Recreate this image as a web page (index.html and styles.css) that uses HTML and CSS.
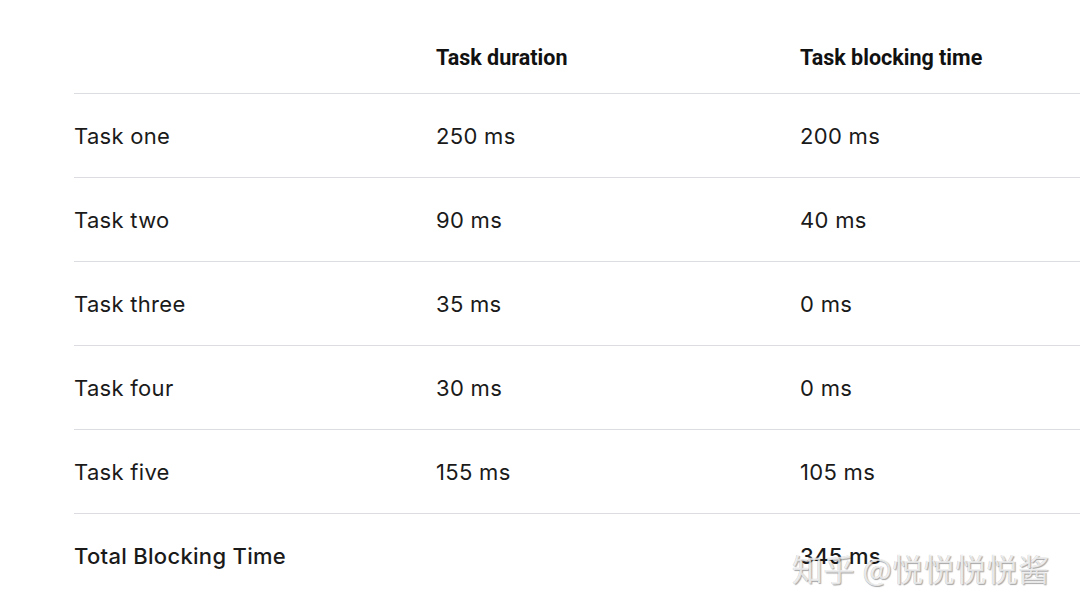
FILE: index.html
```html
<!DOCTYPE html>
<html lang="en">
<head>
<meta charset="utf-8">
<link rel="stylesheet" href="styles.css">
</head>
<body>
<div class="page">
  <div class="table">
    <div class="row head">
      <div class="cell"></div>
      <div class="cell">Task duration</div>
      <div class="cell">Task blocking time</div>
    </div>
    <div class="row">
      <div class="cell">Task one</div>
      <div class="cell">250 ms</div>
      <div class="cell">200 ms</div>
    </div>
    <div class="row">
      <div class="cell">Task two</div>
      <div class="cell">90 ms</div>
      <div class="cell">40 ms</div>
    </div>
    <div class="row">
      <div class="cell">Task three</div>
      <div class="cell">35 ms</div>
      <div class="cell">0 ms</div>
    </div>
    <div class="row">
      <div class="cell">Task four</div>
      <div class="cell">30 ms</div>
      <div class="cell">0 ms</div>
    </div>
    <div class="row">
      <div class="cell">Task five</div>
      <div class="cell">155 ms</div>
      <div class="cell">105 ms</div>
    </div>
    <div class="row total">
      <div class="cell">Total Blocking Time</div>
      <div class="cell"></div>
      <div class="cell">345 ms</div>
    </div>
  </div>
  <div class="watermark">知乎 @悦悦悦悦酱</div>
</div>
</body>
</html>
```
FILE: styles.css
```css
html, body {
  margin: 0;
  padding: 0;
  background: #ffffff;
}
body {
  width: 1080px;
  height: 616px;
  overflow: hidden;
}
.page {
  position: relative;
  width: 1080px;
  height: 616px;
  padding: 20px 0 0 74px;
  box-sizing: border-box;
  font-family: Inter, "Liberation Sans", sans-serif;
  color: #1a1a1a;
}
.table {
  display: flex;
  flex-direction: column;
}
.row {
  display: grid;
  grid-template-columns: 362px 364px 1fr;
  height: 84px;
  box-sizing: border-box;
  align-items: center;
  border-top: 1px solid #dcdde0;
  font-size: 22px;
  letter-spacing: 0.3px;
  padding-top: 1px;
}
.row.head {
  height: 73px;
  padding-top: 1px;
  border-top: none;
  font-family: Roboto, "Liberation Sans", sans-serif;
  font-weight: 700;
  font-size: 21.5px;
  letter-spacing: 0;
  color: #111;
}
.row.total {
  font-weight: 500;
}
.cell {
  white-space: nowrap;
}
.watermark {
  position: absolute;
  left: 792px;
  top: 545px;
  font-family: "Noto Sans CJK SC", sans-serif;
  font-size: 31px;
  color: rgba(255, 255, 255, 0.75);
  text-shadow: 1px 1px 1px rgba(0,0,0,0.35), -0.5px -0.5px 0.5px rgba(0,0,0,0.2);
  letter-spacing: 0.5px;
}
```
